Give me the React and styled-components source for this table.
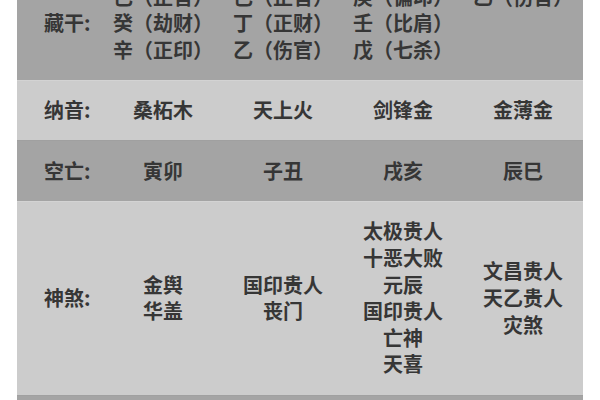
import React from "react";
import styled, { createGlobalStyle } from "styled-components";

const GlobalStyle = createGlobalStyle`
  html, body {
    margin: 0;
    padding: 0;
    background: #ffffff;
    overflow: hidden;
  }
  body {
    font-family: "Noto Sans CJK SC", "Noto Sans", sans-serif;
  }
`;

const Page = styled.div`
  width: 600px;
  height: 400px;
  overflow: hidden;
`;

// the top of the table is scrolled out of view, as in the screenshot
const Table = styled.div`
  width: 566px;
  margin: -34px 0 0 17px;
  display: flex;
  flex-direction: column;
`;

const Row = styled.div`
  display: grid;
  grid-template-columns: 86px repeat(4, 120px);
  align-items: center;
  padding: 16.5px 0;
  background: ${(p) => (p.$dark ? "#a4a4a4" : "#cccccc")};
  border-top: 1px solid ${(p) => (p.$dark ? "#a0a0a0" : "#d3d3d3")};
  box-sizing: border-box;
  min-height: ${(p) => p.$min || 0}px;
`;

const Label = styled.div`
  padding-left: 27px;
  font-size: 20px;
  line-height: 26.6px;
  font-weight: 700;
  color: #363636;
  white-space: nowrap;
`;

const Cell = styled.div`
  display: flex;
  flex-direction: column;
  align-items: center;
  align-self: ${(p) => (p.$top ? "start" : "center")};
  font-size: 20px;
  line-height: 26.6px;
  font-weight: 700;
  color: #363636;
  white-space: nowrap;
`;

const rows = [
  {
    label: "藏干:",
    dark: true,
    cells: [
      ["己（正官）", "癸（劫财）", "辛（正印）"],
      ["己（正官）", "丁（正财）", "乙（伤官）"],
      ["庚（偏印）", "壬（比肩）", "戊（七杀）"],
      ["乙（伤官）"],
    ],
    top: true,
  },
  { label: "纳音:", cells: [["桑柘木"], ["天上火"], ["剑锋金"], ["金薄金"]] },
  { label: "空亡:", dark: true, cells: [["寅卯"], ["子丑"], ["戌亥"], ["辰巳"]] },
  {
    label: "神煞:",
    cells: [
      ["金舆", "华盖"],
      ["国印贵人", "丧门"],
      ["太极贵人", "十恶大败", "元辰", "国印贵人", "亡神", "天喜"],
      ["文昌贵人", "天乙贵人", "灾煞"],
    ],
  },
  { label: "", dark: true, cells: [[""], [""], [""], [""]], min: 60 },
];

export default function App() {
  return (
    <Page>
      <GlobalStyle />
      <Table>
        {rows.map((r, i) => (
          <Row key={i} $dark={r.dark} $min={r.min}>
            <Label>{r.label}</Label>
            {r.cells.map((lines, j) => (
              <Cell key={j} $top={r.top}>
                {lines.map((t, k) => (
                  <span key={k}>{t || "\u00a0"}</span>
                ))}
              </Cell>
            ))}
          </Row>
        ))}
      </Table>
    </Page>
  );
}
